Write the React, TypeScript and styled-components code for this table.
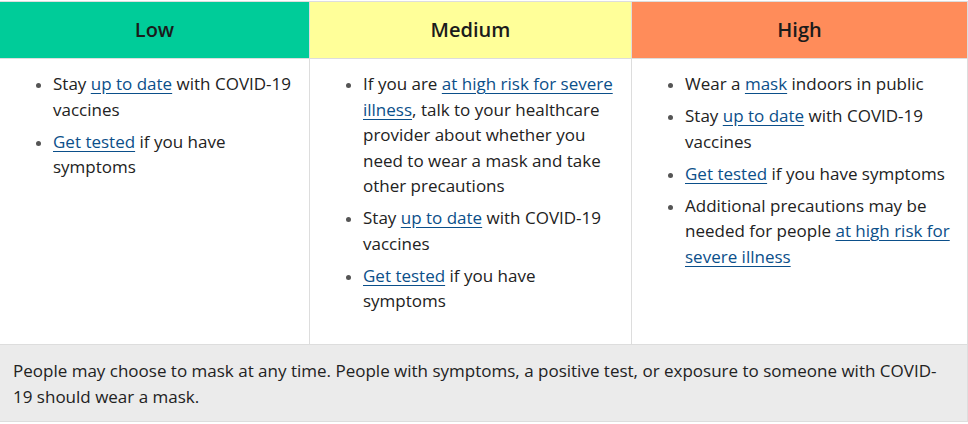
import React from "react";
import styled, { createGlobalStyle } from "styled-components";

const Global = createGlobalStyle`
  html, body { margin: 0; padding: 0; background: #fff; }
  body { font-family: "Open Sans", "Noto Sans", sans-serif; color: #222; }
`;

const Page = styled.div`
  padding-top: 1px;
  width: 968px;
`;

const Table = styled.div`
  width: 968px;
  box-sizing: border-box;
  border-top: 1px solid #dddddd;
  border-right: 1px solid #dddddd;
  border-bottom: 1px solid #dddddd;
  display: grid;
  grid-template-columns: 309px 322px 336px;
`;

const levelBg: Record<string, string> = {
  low: "#00cc99",
  medium: "#ffff99",
  high: "#ff8c5a",
};

const HeadCell = styled.div<{ $level: string; $first?: boolean }>`
  background: ${(p) => levelBg[p.$level]};
  height: 57px;
  box-sizing: border-box;
  padding-bottom: 2px;
  display: flex;
  align-items: center;
  justify-content: center;
  font-size: 20px;
  font-weight: 600;
  color: #1b1b1b;
  border-bottom: 1px solid #dddddd;
  border-left: ${(p) => (p.$first ? "none" : "1px solid #dddddd")};
`;

const BodyCell = styled.div<{ $first?: boolean }>`
  background: #fff;
  border-left: ${(p) => (p.$first ? "none" : "1px solid #dddddd")};
  padding: 12px 12px 24px 0;
  height: 285px;
  box-sizing: border-box;
`;

const List = styled.ul`
  margin: 0;
  padding-left: 53px;
  list-style: disc;
`;

const Item = styled.li`
  font-size: 17px;
  line-height: 25.5px;
  margin-bottom: 6.5px;
  color: #222;
  &::marker { color: #555; font-size: 15px; }
`;

const Link = styled.a`
  color: #0b4f8a;
  text-decoration: underline;
  text-underline-offset: 3px;
`;

const Footer = styled.div`
  grid-column: 1 / -1;
  background: #ebebeb;
  border-top: 1px solid #dddddd;
  padding: 13px 13px 12px 13px;
  font-size: 17px;
  line-height: 25.5px;
  color: #222;
`;

export default function App() {
  return (
    <Page>
      <Global />
      <Table>
        <HeadCell $level="low" $first>Low</HeadCell>
        <HeadCell $level="medium">Medium</HeadCell>
        <HeadCell $level="high">High</HeadCell>

        <BodyCell $first>
          <List>
            <Item>
              Stay <Link href="#">up to date</Link> with COVID-19 vaccines
            </Item>
            <Item>
              <Link href="#">Get tested</Link> if you have symptoms
            </Item>
          </List>
        </BodyCell>
        <BodyCell>
          <List>
            <Item>
              If you are <Link href="#">at high risk for severe illness</Link>, talk to your
              healthcare provider about whether you need to wear a mask and take other precautions
            </Item>
            <Item>
              Stay <Link href="#">up to date</Link> with COVID-19 vaccines
            </Item>
            <Item>
              <Link href="#">Get tested</Link> if you have symptoms
            </Item>
          </List>
        </BodyCell>
        <BodyCell>
          <List>
            <Item>
              Wear a <Link href="#">mask</Link> indoors in public
            </Item>
            <Item>
              Stay <Link href="#">up to date</Link> with COVID-19 vaccines
            </Item>
            <Item>
              <Link href="#">Get tested</Link> if you have symptoms
            </Item>
            <Item>
              Additional precautions may be needed for people{" "}
              <Link href="#">at high risk for severe illness</Link>
            </Item>
          </List>
        </BodyCell>

        <Footer>
          People may choose to mask at any time. People with symptoms, a positive test, or exposure
          to someone with COVID-19 should wear a mask.
        </Footer>
      </Table>
    </Page>
  );
}
